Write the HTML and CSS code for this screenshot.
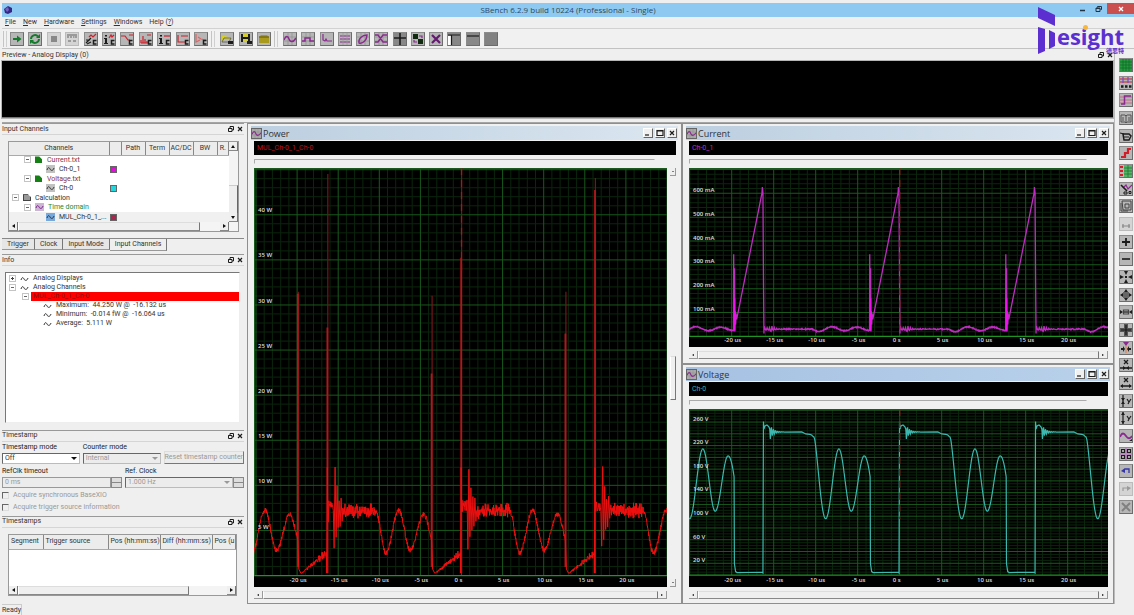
FILE: index.html
```html
<!DOCTYPE html>
<html lang="en">
<head>
<meta charset="utf-8">
<title>SBench 6.2.9</title>
<link rel="stylesheet" href="styles.css">
</head>
<body>
<div class="app">
  <header class="titlebar">
    <svg class="app-icon" viewBox="0 0 10 10"><path d="M1 4 5 1l4 2v4L5 9 2 8z" fill="#342a86"/><path d="M2 4l3-2 1 3-2 2z" fill="#7263c4"/></svg>
    <h1 class="app-title">SBench 6.2.9 build 10224 (Professional - Single)</h1>
    <div class="sys">
      <button class="sys-btn" aria-label="Minimize"><svg viewBox="0 0 8 8"><path d="M1 5.500h5" stroke="#234" stroke-width="1.500"/></svg></button>
      <button class="sys-btn" aria-label="Restore"><svg viewBox="0 0 8 8"><path d="M2.500 2.500v-1h4v3h-1M1 3h4v3.500H1zM1 3.500h4" fill="none" stroke="#234"/></svg></button>
      <button class="sys-btn close" aria-label="Close"><svg viewBox="0 0 8 8"><path d="M2 2l4 4M6 2 2 6" stroke="#fff" stroke-width="1.300"/></svg></button>
    </div>
  </header>
  <nav class="menubar">
    <button><u>F</u>ile</button><button><u>N</u>ew</button><button><u>H</u>ardware</button><button><u>S</u>ettings</button><button><u>W</u>indows</button><button>Help (<u>?</u>)</button>
  </nav>
  <div class="toolbar">
    <div class="group g-hw" id="tb-hw"></div>
    <div class="group g-file" id="tb-file"></div>
    <div class="group g-view" id="tb-view"></div>
  </div>

  <div class="logo">
    <svg class="logo-mark" viewBox="0 0 18 48"><path d="M0 0l17 8v11L0 11zM0 20l7 2v22l-7 3zM11 23l6 3v13l-6 3z" fill="#5b2fd0"/></svg>
    <span class="logo-word">esight</span>
    <span class="logo-dot"></span>
    <span class="logo-cjk">德思特</span>
  </div>

  <div class="work">
    <div class="center">
      <section class="preview">
        <div class="preview-head"><h2>Preview - Analog Display (0)</h2><span class="dock-btns"></span></div>
        <div class="preview-screen"></div>
      </section>
      <div class="lower">
        <aside class="docks">
          <section class="dock">
            <div class="dock-head"><h2>Input Channels</h2><span class="dock-btns"></span></div>
            <div class="channels">
              <div class="channel-view">
                <table class="channel-table">
                  <colgroup><col class="c-name"><col class="c-color"><col class="c-mid"><col class="c-mid"><col class="c-mid"><col class="c-mid"><col></colgroup>
                  <thead><tr><th>Channels</th><th></th><th>Path</th><th>Term</th><th>AC/DC</th><th>BW</th><th>R.</th></tr></thead>
                  <tbody>
                    <tr><td class="lv1"><i class="exp"></i><i class="ic file"></i><span class="maroon">Current.txt</span></td><td></td><td colspan="5"></td></tr>
                    <tr><td class="lv2"><i class="ic wave"></i>Ch-0_1</td><td><i class="sw magenta"></i></td><td colspan="5"></td></tr>
                    <tr><td class="lv1"><i class="exp"></i><i class="ic file"></i><span class="maroon">Voltage.txt</span></td><td></td><td colspan="5"></td></tr>
                    <tr><td class="lv2"><i class="ic wave"></i>Ch-0</td><td><i class="sw cyan"></i></td><td colspan="5"></td></tr>
                    <tr><td class="lv0"><i class="exp"></i><i class="ic calc"></i>Calculation</td><td></td><td colspan="5"></td></tr>
                    <tr><td class="lv1"><i class="exp"></i><i class="ic wave violet"></i><span class="green">Time domain</span></td><td></td><td colspan="5"></td></tr>
                    <tr class="current"><td class="lv2"><i class="ic wave blue"></i>MUL_Ch-0_1_...</td><td><i class="sw crimson"></i></td><td colspan="5"></td></tr>
                  </tbody>
                </table>
                <div class="vbar"><button class="arr up" aria-label="Scroll up"></button><span class="vthumb"></span><button class="arr down" aria-label="Scroll down"></button></div>
              </div>
              <div class="hbar"><button class="arr left" aria-label="Scroll left"></button><span class="thumb"></span><button class="arr right" aria-label="Scroll right"></button></div>
            </div>
            <div class="tabs"><button>Trigger</button><button>Clock</button><button>Input Mode</button><button class="on">Input Channels</button></div>
          </section>

          <section class="dock info">
            <div class="dock-head"><h2>Info</h2><span class="dock-btns"></span></div>
            <ul class="info-tree">
              <li class="n0"><i class="exp plus"></i><i class="ic wave bare"></i>Analog Displays</li>
              <li class="n0"><i class="exp"></i><i class="ic wave bare"></i>Analog Channels</li>
              <li class="n1"><i class="exp"></i><span class="hot">MUL_Ch-0_1_Ch-0</span></li>
              <li class="n2"><i class="ic wave bare"></i>Maximum:&nbsp; 44.250 W @ &nbsp;-16.132 us</li>
              <li class="n2"><i class="ic wave bare"></i>Minimum:&nbsp; -0.014 fW @ &nbsp;-16.064 us</li>
              <li class="n2"><i class="ic wave bare"></i>Average:&nbsp; 5.111 W</li>
            </ul>
          </section>

          <section class="dock">
            <div class="dock-head"><h2>Timestamp</h2><span class="dock-btns"></span></div>
            <form class="ts-form">
              <div class="ts-row">
                <div class="field f-a"><label for="tsmode">Timestamp mode</label><span class="sel"><select id="tsmode"><option>Off</option></select></span></div>
                <div class="field f-a"><label for="cmode">Counter mode</label><span class="sel off"><select id="cmode" disabled><option>Internal</option></select></span></div>
                <button class="reset" type="button" disabled>Reset timestamp counter</button>
              </div>
              <div class="ts-row">
                <div class="field f-b"><label for="reft">RefClk timeout</label><span class="spin"><input id="reft" value="0 ms" disabled><i class="steps"></i></span></div>
                <div class="field f-c"><label for="refc">Ref. Clock</label><span class="spin"><span class="sel off"><select id="refc" disabled><option>1.000 Hz</option></select></span><i class="steps"></i></span></div>
              </div>
              <label class="check"><input type="checkbox" disabled>Acquire synchronous BaseXIO</label>
              <label class="check"><input type="checkbox" disabled>Acquire trigger source information</label>
            </form>
          </section>

          <section class="dock">
            <div class="dock-head"><h2>Timestamps</h2><span class="dock-btns"></span></div>
            <div class="stamps">
              <table class="stamp-table"><colgroup><col class="s1"><col class="s2"><col class="s3"><col class="s3"><col></colgroup>
                <thead><tr><th>Segment</th><th>Trigger source</th><th>Pos (hh:mm:ss)</th><th>Diff (hh:mm:ss)</th><th>Pos (u</th></tr></thead></table>
              <div class="stamp-body"></div>
              <div class="hbar"><button class="arr left" aria-label="Scroll left"></button><span class="thumb"></span><button class="arr right" aria-label="Scroll right"></button></div>
            </div>
          </section>
        </aside>

        <main class="mdi">
          <section class="win tall">
            <div class="win-head"><i class="win-ic"></i><h2>Power</h2><span class="win-btns"></span></div>
            <div class="win-body">
              <div class="legend red">MUL_Ch-0_1_Ch-0</div>
              <div class="slider"></div>
              <div class="plot" id="power"></div>
              <div class="vbar side"><button class="arr up" aria-label="Scroll up"></button><span class="vthumb"></span><button class="arr down" aria-label="Scroll down"></button></div>
              <div class="hbar"><button class="arr left" aria-label="Scroll left"></button><span class="thumb"></span><button class="arr right" aria-label="Scroll right"></button></div>
            </div>
          </section>
          <section class="win">
            <div class="win-head"><i class="win-ic"></i><h2>Current</h2><span class="win-btns"></span></div>
            <div class="win-body">
              <div class="legend mag">Ch-0_1</div>
              <div class="slider"></div>
              <div class="plot" id="current"></div>
              <div class="hbar"><button class="arr left" aria-label="Scroll left"></button><span class="thumb"></span><button class="arr right" aria-label="Scroll right"></button></div>
            </div>
          </section>
          <section class="win active">
            <div class="win-head"><i class="win-ic"></i><h2>Voltage</h2><span class="win-btns"></span></div>
            <div class="win-body">
              <div class="legend teal">Ch-0</div>
              <div class="slider"></div>
              <div class="plot" id="voltage"></div>
              <div class="hbar"><button class="arr left" aria-label="Scroll left"></button><span class="thumb"></span><button class="arr right" aria-label="Scroll right"></button></div>
            </div>
          </section>
        </main>
      </div>
    </div>
    <div class="sidebar"><div class="side-icons" id="tb-side"></div></div>
  </div>
  <footer class="status"><span>Ready</span></footer>
</div>
<script src="app.js"></script>
</body>
</html>
```

FILE: styles.css
```css
* { box-sizing: border-box; }
body { margin: 0; background: #efefef; color: #333; font: 7px/9px Roboto, "Open Sans", sans-serif; }
h1, h2, ul { margin: 0; padding: 0; font-size: inherit; font-weight: 400; list-style: none; }
button, select, input { font: inherit; color: inherit; margin: 0; padding: 0; border: 0; background: none; border-radius: 0; }
svg { display: block; }
i { font-style: normal; }
.app { position: relative; display: flex; flex-direction: column; min-height: 100vh; padding: 3px 0 0 2px; background: #efefef; }

.titlebar { display: flex; align-items: center; height: 14px; background: #8dc9f1; padding-left: 1px; }
.app-icon { width: 10px; height: 10px; }
.app-title { flex: 1; text-align: center; padding-left: 48px; font: 8px/12px "Open Sans", sans-serif; color: #2f4a5c; }
.sys { display: flex; align-self: flex-start; align-items: center; height: 11px; }
.sys-btn { width: 16px; height: 11px; display: grid; place-items: center; }
.sys-btn svg { width: 8px; height: 8px; }
.sys-btn.close { width: 27px; background: #c9504f; }

.menubar { display: flex; gap: 7px; height: 11px; padding-left: 3px; }
.menubar button { line-height: 11px; }
.toolbar { display: flex; gap: 3px; height: 21px; padding-left: 1px; background: #f1f1f1; border-top: 1px solid #d2d2d2; border-bottom: 1px solid #c2c2c2; align-items: center; }
.group { display: flex; justify-content: space-between; align-items: center; padding-left: 6px; border-left: 1px solid #c4c4c4; box-shadow: inset 2px 0 0 #f1f1f1, inset 3px 0 0 #cfcfcf; height: 16px; }
.g-hw { width: 205px; }
.g-file { width: 60px; padding-left: 8px; }
.g-view { width: 224px; padding-left: 8px; }
.tool { width: 14px; height: 14px; border: 1px solid; border-color: #8c8c8c #6c6c6c #6c6c6c #8c8c8c; background: #b6b6b6; overflow: hidden; }
.tool svg { width: 12px; height: 12px; }
.tool:disabled { border-color: #bbb; background: #d4d4d4; }

.logo { position: absolute; top: 7px; right: 8px; width: 88px; height: 48px; color: #5b2fd0; pointer-events: none; z-index: 2; }
.logo-mark { width: 18px; height: 48px; }
.logo-word { position: absolute; right: 2px; top: 18px; font: 700 22px/22px "Open Sans", sans-serif; }
.logo-dot { position: absolute; left: 45px; top: 18px; width: 5px; height: 5px; border-radius: 50%; background: #f6b73c; }
.logo-cjk { position: absolute; right: 2px; bottom: 1px; font: 700 6px/6px "Noto Sans CJK SC", sans-serif; }

.work { display: flex; flex: 1; }
.center { flex: 1; display: flex; flex-direction: column; min-width: 0; }
.preview-head, .dock-head { display: flex; justify-content: space-between; align-items: center; height: 12px; }
.preview-screen { height: 57px; background: #000; border-bottom: 1px solid #777; box-shadow: 0 0 0 1px #b5b5b5; margin: 0 1px 0 0; }
.dock-btns { display: flex; gap: 3px; padding-right: 1px; }
.dock-btns svg { width: 6px; height: 6px; }
.lower { flex: 1; display: flex; margin-top: 4px; border-top: 1px solid #a5a5a5; }
.docks { width: 245px; padding: 0 3px 3px 0; display: flex; flex-direction: column; gap: 4px; }
.dock-head { border-bottom: 1px solid #d5d5d5; border-top: 1px solid #999; }
.dock-head h2 { font-size: 7px; }
.info { flex: 1; display: flex; flex-direction: column; }

.channels { margin: 6px 5px 6px 6px; border: 1px solid #999; background: #fff; }
.channel-view { display: flex; }
.channel-table { flex: 1; min-width: 0; height: 80px; table-layout: fixed; border-collapse: collapse; }
th { font-weight: 400; padding: 0; background: #ececec; border-right: 1px solid #888; border-bottom: 1px solid #aaa; height: 13px; white-space: nowrap; overflow: hidden; }
td { padding: 0; white-space: nowrap; overflow: hidden; }
.c-name { width: 100px; }
.c-color { width: 12px; }
.c-mid { width: 24px; }
.lv0 { padding-left: 3px; }
.lv1 { padding-left: 15px; }
.lv2 { padding-left: 37px; }
.maroon { color: #8b2f3c; }
.green { color: #1f8a1f; }
.current { background: #f0f0f0; }
.exp { display: inline-block; width: 7px; height: 7px; margin-right: 4px; border: 1px solid #c4c4c4; background: linear-gradient(#666, #666) center / 3px 1px no-repeat #fff; vertical-align: middle; }
.exp.plus { background: linear-gradient(#444, #444) center / 3px 1px no-repeat, linear-gradient(#444, #444) center / 1px 3px no-repeat #fff; }
.ic { display: inline-block; width: 9px; height: 8px; margin-right: 4px; vertical-align: middle; }
.ic.file { width: 7px; height: 7px; margin-right: 5px; background: #168016; clip-path: polygon(0 0, 60% 0, 100% 40%, 100% 100%, 0 100%); }
.ic.calc { width: 8px; height: 7px; background: #999; border: 1px solid #444; clip-path: polygon(0 0, 60% 0, 100% 40%, 100% 100%, 0 100%); }
.ic.wave { background: #c2c2c2; color: #333; }
.ic.wave.violet { background: #cdb6d3; color: #7a2288; }
.ic.wave.blue { background: #77a9dc; }
.ic.wave.bare { background: none; }
.sw { display: block; width: 7px; height: 7px; margin-left: 1px; border: 1px solid #666; }
.magenta { background: #e010d8; }
.cyan { background: #22d6dd; }
.crimson { background: #a82850; }

.vbar { display: flex; flex-direction: column; width: 9px; background: #f4f4f4; }
.channel-view .vthumb { flex: 1; margin-top: 34px; border-right: 1px solid #666; border-top: 1px solid #ccc; background: #eee; }
.hbar { display: flex; height: 9px; background: #f4f4f4; }
.thumb { flex: 1; background: #efefef; border: 1px solid; border-color: #ddd #777 #888 #fff; }
.channels .thumb { margin-right: 20px; }
.stamps .thumb { margin-right: 38px; }
.channels .hbar { padding-right: 9px; }
.arr { display: grid; place-items: center; width: 9px; height: 9px; background: #efefef; border-right: 1px solid #777; border-bottom: 1px solid #888; }
.arr::after { content: ""; border: 2px solid transparent; }
.arr.up::after { border-bottom: 3px solid #111; border-top: 0; }
.arr.down::after { border-top: 3px solid #111; border-bottom: 0; }
.arr.left::after { border-right: 3px solid #111; border-left: 0; }
.arr.right::after { border-left: 3px solid #111; border-right: 0; }

.tabs { display: flex; align-items: flex-start; border-top: 1px solid #888; height: 12px; }
.tabs button { height: 11px; padding: 0 5px; border-right: 1px solid #777; border-bottom: 1px solid #999; background: #e6e6e6; }
.tabs .on { background: #efefef; height: 12px; }

.info-tree { flex: 1; margin: 6px 4px 3px 3px; padding-top: 1px; border: 1px solid #888; border-color: #777 #eee #eee #777; background: #fff; min-height: 60px; }
.info-tree li { display: flex; align-items: center; height: 9px; margin-left: 3px; white-space: nowrap; }
.info-tree .n1 { margin-left: 16px; }
.info-tree .n2 { margin-left: 37px; }
.n1 .exp { margin-right: 2px; }
.hot { flex: 1; align-self: stretch; background: #f00; color: #8c1010; padding-left: 2px; }

.ts-form { padding-top: 1px; display: flex; flex-direction: column; gap: 3px; }
.ts-row { display: flex; gap: 3px; align-items: flex-end; }
.field { display: flex; flex-direction: column; gap: 1px; }
.f-a { width: 80px; }
.f-b { width: 120px; }
.f-c { flex: 1; }
.field label { height: 9px; color: #222; }
.sel { position: relative; display: block; flex: 1; }
.sel select { appearance: none; display: block; width: 100%; height: 11px; padding-left: 2px; background: #fff; border: 1px solid #888; border-color: #666 #bbb #bbb #666; }
.sel::after { content: ""; position: absolute; right: 3px; top: 4px; border: 3px solid transparent; border-top-color: #111; border-bottom: 0; pointer-events: none; }
.sel.off::after { border-top-color: #999; }
.sel.off select, .spin input { background: #ececec; color: #999; opacity: 1; }
.spin { display: flex; }
.spin input { flex: 1; min-width: 0; height: 11px; padding-left: 2px; border: 1px solid #999; }
.steps { width: 11px; border: 1px solid #888; background: linear-gradient(#888, #888) center / 100% 1px no-repeat #ddd; }
.reset { flex: 1; height: 13px; color: #999; white-space: nowrap; border: 1px solid; border-color: #ddd #777 #777 #ddd; background: #ececec; }
.check { display: flex; align-items: center; gap: 4px; height: 9px; color: #999; }
.check input { appearance: none; width: 7px; height: 7px; border: 1px solid; border-color: #666 #ddd #ddd #666; }

.stamps { margin: 6px 7px 5px 6px; border: 1px solid #999; background: #fff; }
.stamp-table { width: 100%; table-layout: fixed; border-collapse: collapse; }
.stamp-table th { height: 15px; text-align: left; padding-left: 2px; }
.stamp-table .s1 { width: 34px; }
.stamp-table .s2 { width: 65px; }
.stamp-table .s3 { width: 52px; }
.stamp-body { height: 36px; }

.mdi { flex: 1; display: grid; grid-template-columns: 435fr 432fr; grid-template-rows: 242fr 240fr; min-width: 0; }
.win { display: flex; flex-direction: column; min-width: 0; padding: 2px 3px; border: 1px solid #8e8e8e; background: #f0f0f0; }
.win.tall { grid-row: 1 / 3; }
.win-head { display: flex; align-items: center; height: 14px; background: linear-gradient(90deg, #bccfe0, #dbe6f0); }
.active .win-head { background: linear-gradient(90deg, #a6c1e2, #b9d1ea); }
.win-head h2 { flex: 1; font: 9px/13px "Open Sans", sans-serif; color: #333; padding-left: 1px; }
.win-ic { width: 11px; height: 11px; background: #aaa; border: 1px solid #666; }
.win-btns { display: flex; gap: 2px; padding-right: 1px; }
.win-btns button { width: 10px; height: 10px; background: #f0f0f0; border: 1px solid; border-color: #fff #666 #666 #fff; }
.win-btns svg { width: 8px; height: 8px; }
.win-body { flex: 1; display: grid; grid-template-rows: 14px 5px 1fr 8px; row-gap: 4px; padding: 1px 2px 2px 3px; }
.tall .win-body { grid-template-columns: 1fr 6px; column-gap: 3px; }
.tall .legend, .tall .slider { grid-column: 1 / 3; }
.legend { background: #000; padding-left: 3px; line-height: 14px; }
.red { color: #c3121c; }
.mag { color: #c828c8; }
.teal { color: #2fb5b0; }
.slider { margin-right: 21px; border: 1px solid; border-color: #aaa transparent transparent #aaa; }
.plot { position: relative; background: #000; overflow: hidden; min-height: 120px; }
.plot svg { position: absolute; inset: 0; width: 100%; height: 100%; }
.lab { position: absolute; color: #ddd; font: 600 6px/8px "Open Sans", sans-serif; white-space: nowrap; transform: translateY(-50%); }
.lab.x { transform: translate(-50%, -50%); }
.win .arr { border-color: #999; height: 8px; }
.win .arr::after { border-width: 1px; }
.win .arr.left::after { border-right-width: 2px; }
.win .arr.right::after { border-left-width: 2px; }
.win .hbar { height: 8px; }
.side { width: 6px; background: none; }
.side .arr { width: 6px; }
.side .vthumb { height: 44px; margin: auto 0; border: 1px solid; border-color: #ddd #777 #777 #fff; }

.sidebar { width: 20px; padding: 9px 2px 0 4px; border-left: 1px solid #bbb; }
.side-icons { display: flex; flex-direction: column; justify-content: space-between; height: 456px; }
.status { height: 11px; line-height: 11px; }
.status span { display: inline-block; border: 1px solid #ccc; border-left: 0; }
```

FILE: app.js
```js
const P = '#8a2a8f';
const K = '#1c1c1c';
const R = '#d01f2a';
const ln = (d, c, w = 1.2) => `<path d="${d}" fill="none" stroke="${c}" stroke-width="${w}"/>`;
const fl = (d, c) => `<path d="${d}" fill="${c}"/>`;
const grid = ln('M0 4h12M0 8h12M4 0v12M8 0v12', '#8c8c8c', 0.6);
const cMark = ln('M11.500 7.500H8.500v3.500h3', K, 1.5);

const icons = {
  run: fl('M2 5h4V2.500L10.500 6 6 9.500V7H2z', '#167a2c'),
  loop: ln('M2 6a4 4 0 0 1 7-2.500M10 6a4 4 0 0 1-7 2.500', '#167a2c', 2) + fl('M7 5h4V1zM5 7H1v4z', '#167a2c'),
  stop: fl('M3 3h6v6H3z', '#888'),
  force: ln('M1 4h2M4 4h2M7 4h1.500M9 4h2M2 8h3M7 8h3M1 2h10', '#888', 1.5),
  cal: ln('M4 4l2-2 2 2 3-3', R) + ln('M1 10l5-5M1 7h4M2 11l4-2', K, 1.2) + cMark,
  info: fl('M2 2h2v1.500H2zM1 5h3v5h1v1H1v-1h1V6H1z', K) + ln('M6 5l2-3 1 2 2-2', R) + cMark,
  slope: ln('M0 3h4l3 4h2M8 2h4', R) + cMark,
  fft: ln('M1 10V7M3 10V3M5 10V6M7 10V8M1 10h7M7 2h4', R) + cMark,
  info2: fl('M2 2h2v1.500H2zM1 5h3v5h1v1H1v-1h1V6H1z', K) + ln('M6 3h6', R) + cMark,
  pulse: ln('M1 2v7h3M4 9h4M4 3h7', R) + cMark,
  decay: ln('M1 1v8l4-2M3 4l3 2 5 1', '#d66') + cMark,
  open: fl('M1 3h4l1 1h4v2H4L2 9H1z', '#d6cf2a') + ln('M1 9l2-4h7L8 9z', '#555', 0.8) + fl('M7 8h5v3H7z', K),
  save: fl('M1 1h9v8H1z', K) + fl('M3 1h5v3H3zM3 6h5v3H3z', '#d6cf2a') + fl('M7 8h5v3H7z', K),
  disk: fl('M1 4l2-2h6l2 2v6H1z', '#a99a1e') + ln('M1 4h10', '#5e5510', 1),
  wave: grid + ln('M0 7c2-5 4-4 5-1s4 4 7-1', P, 1.5),
  digital: grid + ln('M0 8h3V5h5v3h4', P, 1.5),
  spec: ln('M2 1v6l2 1 1-2 1 2h5', P),
  bars: ln('M1 3h10M1 6h10M1 9h10', P, 1) + ln('M4 0v12M8 0v12', '#999', 0.8),
  xy: grid + ln('M2 10c-1-4 3-8 8-8 0 5-4 9-8 8z', P, 1.4),
  eye: grid + ln('M0 2h3l5 7h4M0 9h3l5-7h4', P, 1.4),
  cross: fl('M0 0h12v12H0z', '#888') + ln('M6 0v12M0 5h12', K, 1.6),
  swap: fl('M1 1h5v5H1zM6 6h5v5H6z', '#102a10') + ln('M7 3h3v2M5 9H2V7', P),
  close: ln('M2 2l8 8M10 2l-8 8', '#641a70', 2.2),
  left: fl('M0 0h12v12H0z', '#888') + fl('M0 3h3v9H0z', '#fff') + ln('M0 2h12M3.500 2v10', K),
  top: fl('M0 0h12v12H0z', '#888') + ln('M0 3h12', K),
  none: fl('M0 0h12v12H0z', '#828282'),
  green: fl('M0 0h12v12H0z', '#239a3c') + ln('M0 3h12M0 6h12M0 9h12M3 0v12M6 0v12M9 0v12', '#12682a', 0.7),
  abc: ln('M0 2h12M0 5h12', R, 1) + ln('M3 0v6M8 0v6', '#7a48c8') + ln('M1 9.500h2.500M5 9.500h2.500M9 9.500h2.500', K, 2.5),
  curve: ln('M0 3h12M0 6h12M0 9h12', '#c86a88') + ln('M1 10h3.500V2H11', P, 1.5),
  book: ln('M1 3h4l1 1 1-1h4v7H7l-1 1-1-1H1zM6 4v6M3 5v4M9 5v4', '#555', 1),
  cam: ln('M3 4h6l2 2-2 4H4z', K, 1.5) + ln('M0 3l4 1M4 7h5', K),
  edge: ln('M1 10h4V6h3V2h3', R, 2.2),
  rows: fl('M4 0h8v12H4z', '#55b468') + ln('M4 3h8M4 6h8M4 9h8M8 0v12', '#196a2c', 0.7) + ln('M0 2h3M0 6h3M0 10h3', R, 2),
  tool: ln('M3 5l3-3 2 4 4-4', P) + ln('M1 2l6 6', K, 1.6) + ln('M4 9h3v2H4zM9 8.500h2v2H9z', K, 1),
  box: ln('M2 1h9v9H3zM5 4h4v4H5zM1 3v8h7', '#444', 1),
  ruler: ln('M2 8h8M3 6v4M9 6v4', '#888'),
  plus: ln('M6 2v8M2 6h8', K, 1.8),
  minus: ln('M2 6h8', K, 1.6),
  shrink: fl('M5 5h2v2H5zM0 4l4 2-4 2zM12 4L8 6l4 2zM4 0l2 4 2-4zM4 12l2-4 2 4z', K),
  grow: fl('M3 3h6v6H3z', '#666') + fl('M0 6l3-2v4zM12 6L9 4v4zM6 0l2 3H4zM6 12l2-3H4z', K),
  fitx: ln('M3.500 4h5v4h-5z', '#444') + fl('M0 4l3 2-3 2zM12 4L9 6l3 2z', K) + ln('M4 6h4', K),
  fity: fl('M4 0h4v4h4v4H8v4H4V8H0V4h4z', '#555') + ln('M6 1v10M1 6h10', K),
  mark: fl('M3 0h6L6 4z', P) + ln('M6 4v7', '#d88a60', 1.3) + fl('M1 6h2V4l2 3-2 3V8H1zM11 6H9V4L7 7l2 3V8h2z', K),
  xin: ln('M4 1l4 4M8 1L4 5M0 9h12', K, 1.3) + fl('M3 7l3 2-3 2zM9 7L6 9l3 2z', K),
  xout: ln('M4 1l4 4M8 1L4 5M1 9h10', K, 1.3) + fl('M3 7L0 9l3 2zM9 7l3 2-3 2z', K),
  yin: ln('M3 0v12M7 4l2 3 2-3M9 7l-1 2', K, 1.2) + fl('M1 3h4L3 6zM1 9h4L3 6z', K),
  yout: ln('M3 0v12M7 4l2 3 2-3M9 7l-1 2', K, 1.2) + fl('M1 3h4L3 0zM1 9h4l-2 3z', K),
  sine: ln('M0 7c2-5 4-4 6-1s4 3 6 0', P, 1.8) + fl('M9 11h3V9z', K),
  four: ln('M6 0v12M0 6h12', '#b98abd', 2) + ln('M1.500 1.500h3v3h-3zM7.500 1.500h3v3h-3zM1.500 7.500h3v3h-3zM7.500 7.500h3v3h-3z', K, 1.2),
  undo: ln('M4 6h-1M5 4h4v4', '#3436a8', 1.3) + fl('M1 6l4-3v5z', '#3436a8'),
  redo: ln('M3 8V5h5', '#999', 1.2) + fl('M7 3l4 2-4 3z', '#999'),
  del: ln('M2 2l8 8M10 2l-8 8', '#808080', 2)
};

const faded = ['stop', 'force', 'ruler', 'redo'];
function fill(id, names) {
  document.getElementById(id).innerHTML = names.map(n =>
    `<button class="tool" aria-label="${n}"${faded.includes(n) ? ' disabled' : ''}><svg viewBox="0 0 12 12">${icons[n]}</svg></button>`).join('');
}
fill('tb-hw', ['run', 'loop', 'stop', 'force', 'cal', 'info', 'slope', 'fft', 'info2', 'pulse', 'decay']);
fill('tb-file', ['open', 'save', 'disk']);
fill('tb-view', ['wave', 'digital', 'spec', 'bars', 'xy', 'eye', 'cross', 'swap', 'close', 'left', 'top', 'none']);
fill('tb-side', ['green', 'abc', 'curve', 'book', 'cam', 'edge', 'rows', 'tool', 'box', 'ruler', 'plus', 'minus', 'shrink',
  'grow', 'fitx', 'fity', 'mark', 'xin', 'xout', 'yin', 'yout', 'sine', 'four', 'undo', 'redo', 'del']);

const each = (s, f) => document.querySelectorAll(s).forEach(f);
each('.ic.wave', e => { e.innerHTML = '<svg viewBox="0 0 9 8"><path d="M1 5c1-3 2-3 3-1s3 2 4-1" fill="none" stroke="currentColor"/></svg>'; });
each('.win-ic', e => { e.innerHTML = `<svg viewBox="0 0 12 12">${icons.wave}</svg>`; });
each('.dock-btns', e => {
  e.innerHTML = `<svg viewBox="0 0 6 6">${ln('M2 2V.500h3.500V4H4M.500 2.500H4v3H.500zM.500 2.500H4', K, 1)}</svg><svg viewBox="0 0 6 6">${ln('M1 1l4 4M5 1L1 5', K, 1.2)}</svg>`;
});
each('.win-btns', e => {
  e.innerHTML = [['Minimize', 'M1 6h4'], ['Maximize', 'M1 1.500h6v5H1zM1 2h6'], ['Close', 'M2 2l4 4M6 2L2 6']].map(b =>
    `<button aria-label="${b[0]}"><svg viewBox="0 0 8 8">${ln(b[1], K, 1.2)}</svg></button>`).join('');
});

let seed = 7;
const rnd = () => { seed = (seed * 16807) % 2147483647; return seed / 2147483647 * 2 - 1; };
const soft = () => (rnd() + rnd()) * 0.7;
const toPath = pts => 'M' + pts.map(p => p[0].toFixed(1) + ' ' + p[1].toFixed(1)).join('L');

/* Cosine-eased curve through a list of turning points, with optional noise. */
function ease(out, x0, knots, noise) {
  for (let k = 1; k < knots.length; k++) {
    const [ax, ay] = knots[k - 1];
    const [bx, by] = knots[k];
    for (let x = ax; x < bx; x += 0.25) {
      const t = (1 - Math.cos(Math.PI * (x - ax) / (bx - ax))) / 2;
      out.push([x0 + x, ay + (by - ay) * t + rnd() * noise]);
    }
  }
}

function plot(id, o) {
  const { w, h, zx, sx, zy, sy } = o;
  let fine = '', major = '';
  for (let i = -30; i <= 30; i++) {
    const d = `M${(zx + i * sx / 5).toFixed(1)} 0V${zy}`;
    if (i % 5) fine += d; else major += d;
  }
  for (let i = 1; zy - i * sy / o.div > 0; i++) {
    const d = `M0 ${(zy - i * sy / o.div).toFixed(1)}H${w}`;
    if (i % o.div) fine += d; else major += d;
  }
  let s = ln(fine, '#0b260d', 1) + ln(major, '#195a1c', 1) + ln(`M0 ${zy}H${w}`, '#1f9423', 1.3) + ln(`M0 .500H${w}M.500 0V${zy}`, '#1d5c20', 1);
  s += o.draw();
  s += `<path d="M${zx} 0V${h * o.dash}" stroke="#a31a1a" stroke-width="1.300" stroke-dasharray="7 5"/>`;
  let t = '';
  for (let i = -4; i <= 4; i++) {
    const x = zx + i * sx + (i ? 1 : -3);
    t += `<span class="lab x" style="left:${x / w * 100}%;top:${o.ly / h * 100}%">${i ? i * 5 + ' us' : '0 s'}</span>`;
  }
  o.labels.forEach((l, i) => { t += `<span class="lab" style="left:${4 / w * 100}%;top:${(o.l0 - i * o.lp) / h * 100}%">${l}</span>`; });
  document.getElementById(id).innerHTML = `<svg viewBox="0 0 ${w} ${h}" preserveAspectRatio="none">${s}</svg>${t}`;
}

plot('power', {
  w: 413, h: 420, zx: 207.5, sx: 41.1, zy: 408.5, sy: 45.2, div: 5, dash: 0.25, ly: 413,
  labels: ['5 W', '10 W', '15 W', '20 W', '25 W', '30 W', '35 W', '40 W'], l0: 359.5, lp: 45.3,
  draw() {
    const a = [];
    let spikes = '', thin = '';
    const first = [124, 128, 124], second = [6, 0, 10], wide = [160, 90, 22], firstWide = [126, 206, 166];
    for (let k = -1; k < 4; k++) {
      const x = 43.8 + 133.8 * k;
      if (k >= 0 && k < 3) {
        spikes += `M${x} ${firstWide[k]}V400M${x + 29.6} ${wide[k]}V406`;
        thin += `M${x + 0.5} ${first[k]}V400M${x + 30} ${second[k]}V406`;
      }
      a.push([x, 374], [x + 1, 402], [x + 3, 406]);
      for (let d = 4; d < 29; d += 0.25) a.push([x + d, 406 - (d - 4) * 0.82 + soft() * d * 0.13]);
      a.push([x + 29, 406], [x + 29.5, 300]);
      for (let d = 30; d < 36; d += 0.5) a.push([x + d, 339 + rnd() * 6 + (d < 31 ? rnd() * 14 : 0)]);
      [382, 302, 372, 320, 363, 331, 358, 330, 352].forEach((y, i) => a.push([x + 36.3 + i, y + rnd() * 3]));
      for (let d = 45; d < 78; d += 0.22) a.push([x + d, 343.5 + soft() * 6]);
      ease(a, x, [[78, 344], [88, 386], [101, 343], [112.5, 383], [126, 347]], 2.4);
      for (let d = 126; d < 133; d += 0.3) a.push([x + d, 347 + (d - 126) ** 1.5 * 1.2 + rnd() * 3]);
    }
    return ln(thin, '#74161a', 1.2) + ln(spikes, '#b0181c', 1.8) + ln(toPath(a), '#f01010', 1);
  }
});

plot('current', {
  w: 421, h: 179, zx: 211.7, sx: 42.2, zy: 168, sy: 23.8, div: 5, dash: 0.9, ly: 172,
  labels: ['100 mA', '200 mA', '300 mA', '400 mA', '500 mA', '600 mA'], l0: 140.5, lp: 23.7,
  draw() {
    const a = [];
    let hot = '';
    for (let k = -1; k < 4; k++) {
      const x = 45.3 + 136.7 * k;
      a.push([x - 0.6, 162], [x - 0.4, 86], [x, 161], [x + 0.4, 100], [x + 0.8, 163], [x + 1.2, 143], [x + 1.6, 156], [x + 2, 145], [x + 2.6, 151]);
      a.push([x + 28, 25], [x + 28.4, 19], [x + 29, 25], [x + 29.6, 120], [x + 30, 165]);
      hot += `M${x + 0.4} 130V162`;
      for (let d = 30; d < 48; d += 0.8) {
        const amp = d < 36 ? 1.5 : 5 * Math.exp(-(d - 36) / 4);
        a.push([x + d, 160.7 + Math.sin(d * 2.6) * amp]);
      }
      for (let d = 48; d < 78; d += 0.5) a.push([x + d, 160.7 + rnd() * 0.6]);
      ease(a, x, [[78, 160.7], [85, 163.3], [98, 158.3], [111, 162.3], [123, 158.7], [136, 162]], 0.4);
    }
    return ln(toPath(a), '#c02cc2', 1.3) + ln(hot, '#f010f0', 1.6);
  }
});

plot('voltage', {
  w: 421, h: 178, zx: 211.7, sx: 42.2, zy: 166.5, sy: 11.8, div: 4, dash: 0.62, ly: 171,
  labels: ['20 V', '60 V', '100 V', '140 V', '180 V', '220 V', '260 V'], l0: 151, lp: 23.6,
  draw() {
    const a = [];
    for (let k = -1; k < 4; k++) {
      const x = 45.3 + 136.7 * k;
      a.push([x, 68], [x + 0.3, 155], [x + 1.5, 163], [x + 3, 164], [x + 28, 163.7], [x + 29, 164.5], [x + 29.5, 12.5], [x + 30, 20]);
      a.push([x + 31, 17], [x + 33, 16], [x + 35, 18], [x + 35.8, 20]);
      for (let d = 36; d < 50; d += 0.4) a.push([x + d, 23 + Math.cos((d - 36.5) * 3.2) * 8.5 * Math.exp(-(d - 36) / 3)]);
      a.push([x + 68, 23], [x + 72, 25], [x + 76, 25.5]);
      ease(a, x, [[77, 25.7], [80.4, 28]], 0);
      for (let d = 81; d < 92; d += 0.4) a.push([x + d, 28 + 82 * Math.sin(Math.PI / 2 * ((d - 80.4) / 11.6)) ** 1.4]);
      ease(a, x, [[92, 110], [105.3, 40], [117.7, 102.5], [130.7, 47]], 0);
      for (let d = 130.7; d < 136.7; d += 0.4) a.push([x + d, 47 + ((d - 130.7) / 6) ** 2 * 21]);
    }
    return ln(toPath(a), '#3cb8b0', 1.2);
  }
});
```
